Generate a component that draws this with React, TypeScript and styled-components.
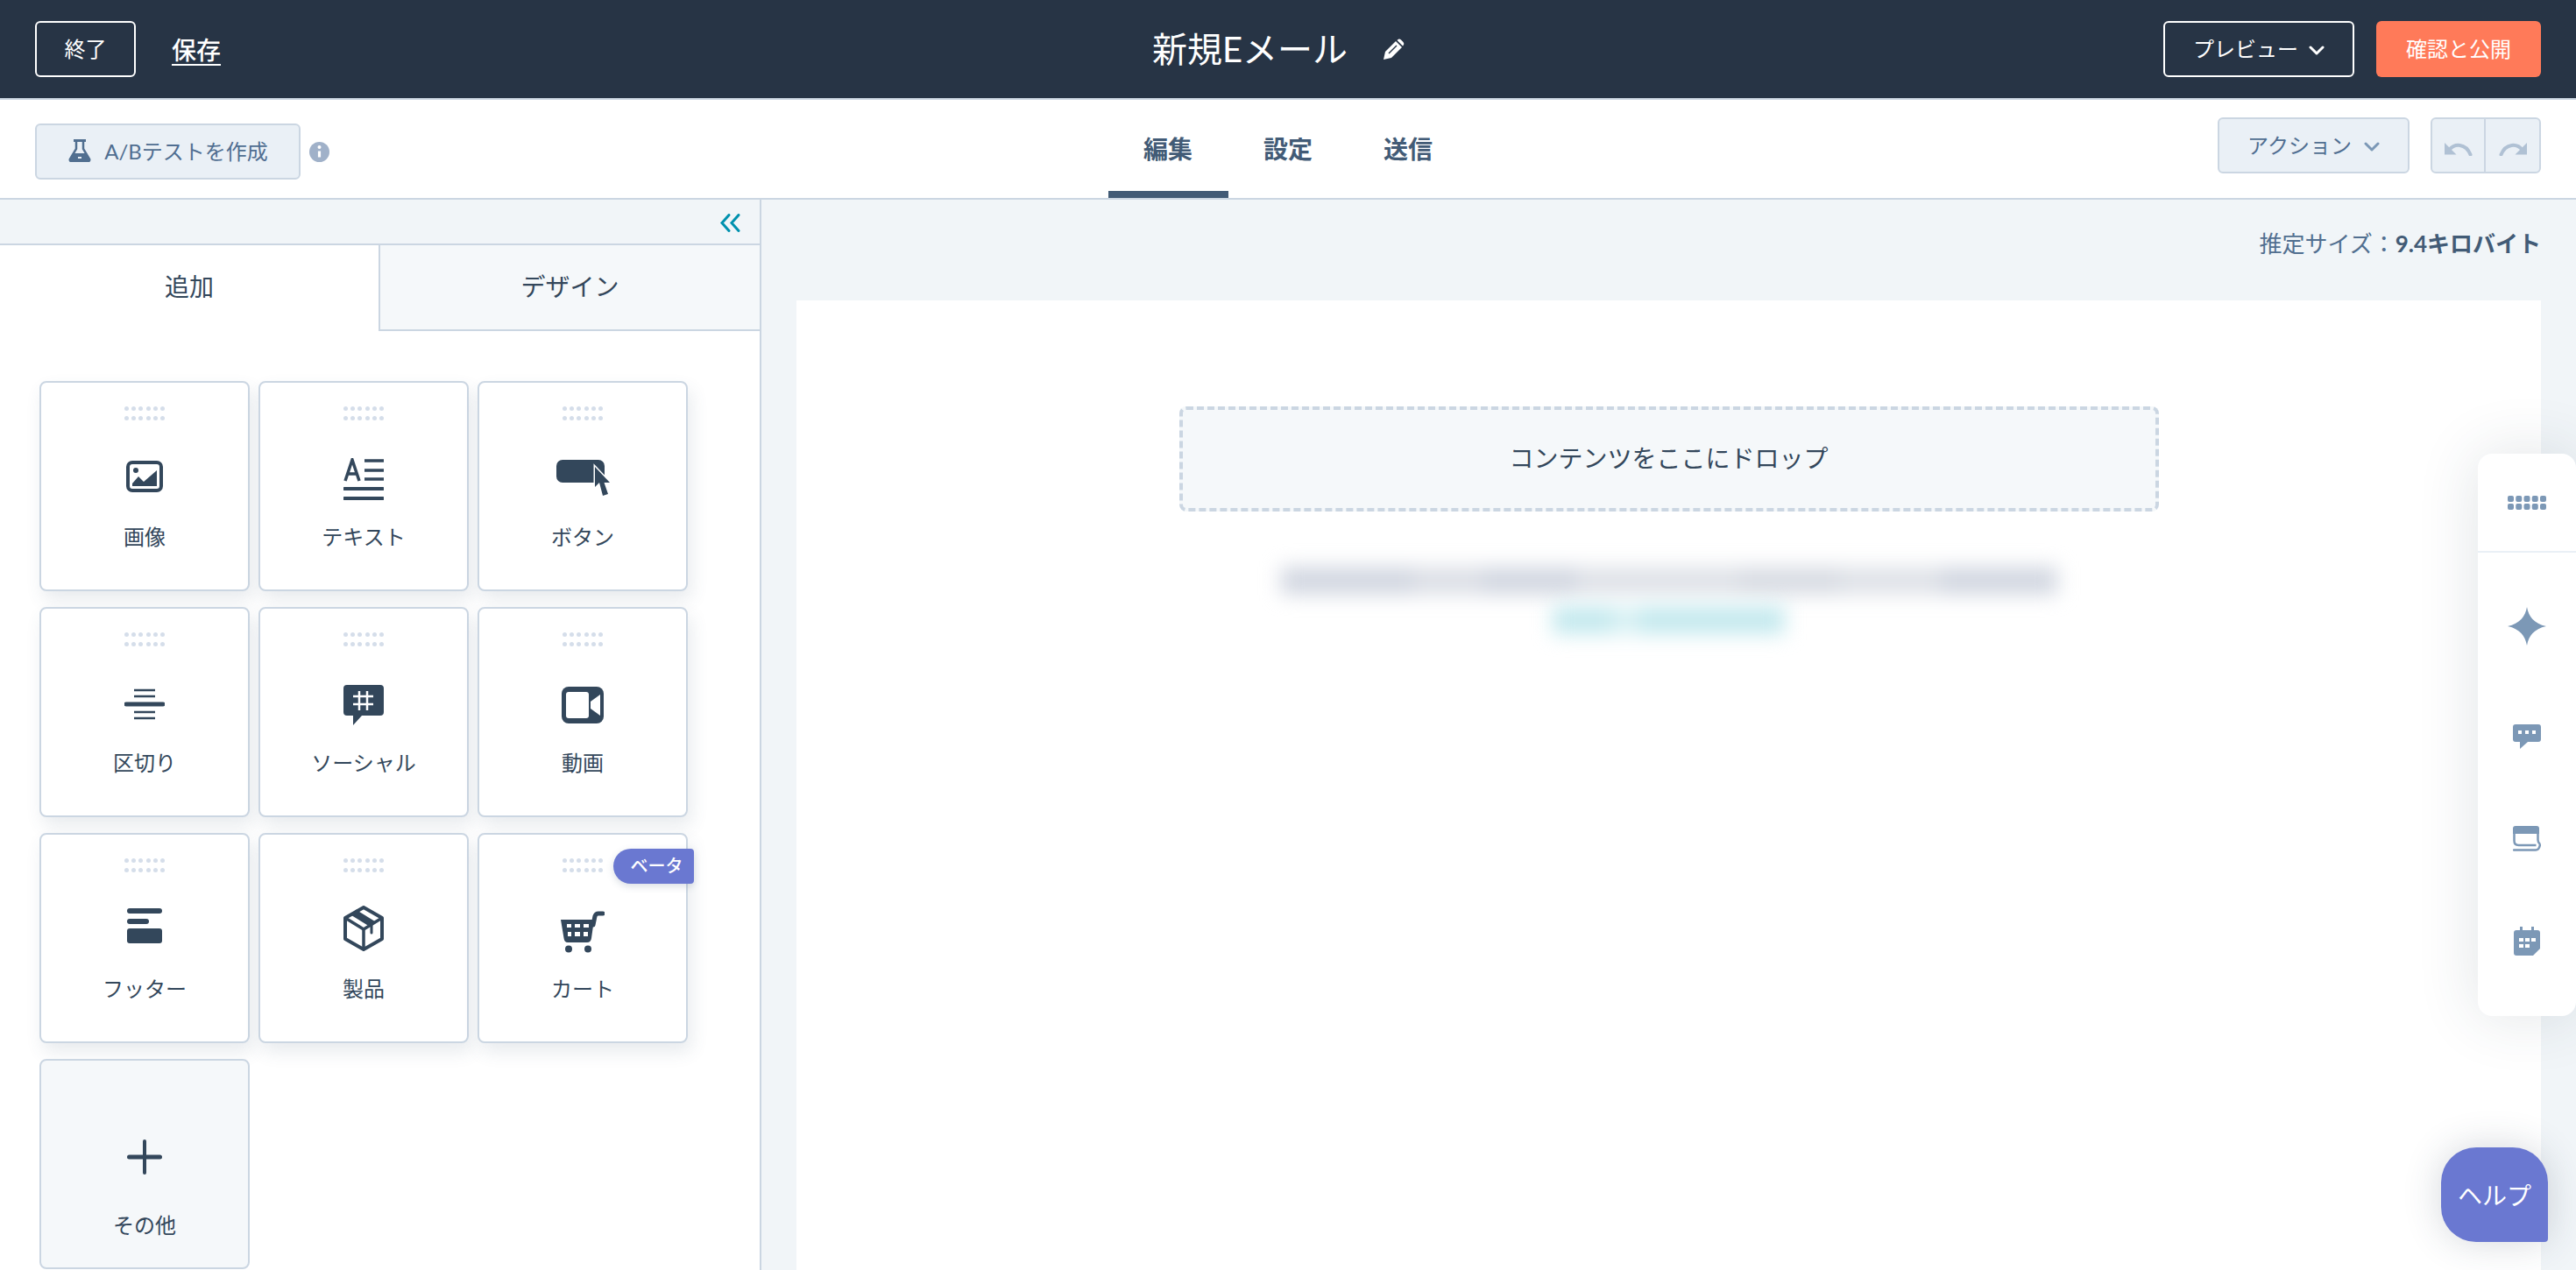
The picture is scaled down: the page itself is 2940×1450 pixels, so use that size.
import React from 'react'
import styled, { createGlobalStyle } from 'styled-components'

const GlobalStyle = createGlobalStyle`
  html, body {
    margin: 0;
    padding: 0;
    height: 100%;
    overflow: hidden;
    background: #fff;
  }
  body {
    font-family: Lato, 'Noto Sans CJK JP', sans-serif;
    color: #33475b;
  }
  * {
    box-sizing: border-box;
  }
`

const Page = styled.div`
  width: 2940px;
  height: 1450px;
  display: flex;
  flex-direction: column;
  overflow: hidden;
  position: relative;
`

const TopBar = styled.header`
  height: 114px;
  flex: none;
  background: #273445;
  border-bottom: 2px solid #cbd6e2;
  display: grid;
  grid-template-columns: 1fr auto 1fr;
  align-items: center;
  padding: 0 40px;
  color: #fff;
`

const TopLeft = styled.div`
  display: flex;
  align-items: center;
  gap: 41px;
`

const TopRight = styled.div`
  display: flex;
  align-items: center;
  justify-content: flex-end;
  gap: 25px;
`

const GhostButton = styled.button<{ $width: number }>`
  width: ${(p) => p.$width}px;
  height: 64px;
  padding: 0 0 3px;
  background: transparent;
  border: 2px solid #fff;
  border-radius: 6px;
  color: #fff;
  font: inherit;
  font-size: 24px;
  display: flex;
  align-items: center;
  justify-content: center;
  gap: 12px;
`

const SaveLink = styled.a`
  color: #fff;
  font-size: 28px;
  font-weight: 500;
  text-decoration: underline;
  text-underline-offset: 5px;
`

const PublishButton = styled.button`
  width: 188px;
  height: 64px;
  padding: 0 0 3px;
  background: #ff7a59;
  border: 0;
  border-radius: 6px;
  color: #fff;
  font: inherit;
  font-size: 24px;
`

const TitleGroup = styled.div`
  display: flex;
  align-items: center;
  gap: 40px;
  margin-right: 21px;
`

const Title = styled.h1`
  margin: 0;
  font-size: 40px;
  font-weight: 400;
  line-height: 56px;
`

const SubBar = styled.div`
  height: 114px;
  flex: none;
  background: #fff;
  border-bottom: 2px solid #cbd6e2;
  display: grid;
  grid-template-columns: 1fr auto 1fr;
  align-items: stretch;
  padding: 0 40px;
`

const SubLeft = styled.div`
  display: flex;
  align-items: center;
  gap: 10px;
  padding-top: 6px;
`

const SubRight = styled.div`
  display: flex;
  align-items: center;
  justify-content: flex-end;
  gap: 24px;
  padding-bottom: 8px;
`

const SoftButton = styled.button<{ $width: number }>`
  width: ${(p) => p.$width}px;
  height: 64px;
  padding: 0 0 3px;
  background: #eaf0f6;
  border: 2px solid #cbd6e2;
  border-radius: 6px;
  color: #506e91;
  font: inherit;
  font-size: 24px;
  display: flex;
  align-items: center;
  justify-content: center;
  gap: 14px;
`

const UndoGroup = styled.div`
  width: 126px;
  height: 64px;
  display: grid;
  grid-template-columns: 1fr 1fr;
  background: #eaf0f6;
  border: 2px solid #cbd6e2;
  border-radius: 6px;
`

const UndoCell = styled.div<{ $divided?: boolean }>`
  display: flex;
  align-items: center;
  justify-content: center;
  padding-top: 6px;
  color: #b0c1d4;
  border-right: ${(p) => (p.$divided ? '2px solid #cbd6e2' : '0')};
`

const NavTabs = styled.nav`
  display: flex;
`

const NavTab = styled.div<{ $active?: boolean }>`
  width: 137px;
  padding-bottom: 3px;
  display: flex;
  align-items: center;
  justify-content: center;
  font-size: 28px;
  font-weight: 700;
  color: #425b76;
  box-shadow: ${(p) => (p.$active ? 'inset 0 -8px 0 #425b76' : 'none')};
`

const Body = styled.div`
  flex: 1;
  display: flex;
  min-height: 0;
`

const Sidebar = styled.aside`
  width: 869px;
  flex: none;
  background: #fff;
  border-right: 2px solid #cbd6e2;
  display: flex;
  flex-direction: column;
`

const CollapseBar = styled.div`
  height: 52px;
  flex: none;
  background: #f1f5f8;
  border-bottom: 2px solid #cbd6e2;
  display: flex;
  align-items: center;
  justify-content: flex-end;
  padding: 2px 21px 0 0;
  color: #0091ae;
`

const PanelTabs = styled.div`
  height: 98px;
  flex: none;
  display: grid;
  grid-template-columns: 432px 1fr;
`

const PanelTab = styled.div<{ $active?: boolean }>`
  display: flex;
  align-items: center;
  justify-content: center;
  padding-bottom: ${(p) => (p.$active ? 7 : 5)}px;
  font-size: 28px;
  background: ${(p) => (p.$active ? '#fff' : '#f5f8fa')};
  border-left: ${(p) => (p.$active ? '0' : '2px solid #cbd6e2')};
  border-bottom: ${(p) => (p.$active ? '0' : '2px solid #cbd6e2')};
`

const ModuleGrid = styled.div`
  display: grid;
  grid-template-columns: repeat(3, 240px);
  grid-auto-rows: 240px;
  column-gap: 10px;
  row-gap: 18px;
  padding: 57px 0 0 45px;
`

const ModuleCard = styled.div<{ $more?: boolean }>`
  position: relative;
  display: flex;
  flex-direction: column;
  align-items: center;
  padding-top: ${(p) => (p.$more ? 76 : 27)}px;
  background: ${(p) => (p.$more ? '#f5f8fa' : '#fff')};
  border: 2px solid #cbd6e2;
  border-radius: 8px;
  box-shadow: ${(p) => (p.$more ? 'none' : '4px 10px 20px rgba(66, 91, 118, 0.12)')};
`

const Grip = styled.div`
  display: grid;
  grid-template-columns: repeat(6, 5px);
  grid-auto-rows: 5px;
  column-gap: 3.4px;
  row-gap: 6px;
  height: 16px;
  margin-bottom: 30px;
`

const GripDot = styled.span`
  background: #d5deea;
  border-radius: 50%;
`

// $nudge moves the drawing off the slot's centre, each icon sits a little differently
const IconSlot = styled.div<{ $nudge?: number }>`
  height: 68px;
  padding-top: ${(p) => Math.max(p.$nudge ?? 0, 0) * 2}px;
  padding-bottom: ${(p) => Math.max(-(p.$nudge ?? 0), 0) * 2}px;
  display: flex;
  align-items: center;
  justify-content: center;
  color: #33475b;
`

const ModuleLabel = styled.div<{ $more?: boolean }>`
  margin-top: ${(p) => (p.$more ? 26 : 17)}px;
  font-size: 24px;
  line-height: 36px;
`

const BetaBadge = styled.span`
  position: absolute;
  top: 16px;
  right: -9px;
  width: 92px;
  height: 40px;
  padding: 0 0 3px 7px;
  display: flex;
  align-items: center;
  justify-content: center;
  background: #6a78d1;
  color: #fff;
  font-size: 20px;
  font-weight: 500;
  border-radius: 20px 4px 4px 20px;
  box-shadow: 0 3px 8px rgba(66, 91, 118, 0.2);
`

const Main = styled.main`
  flex: 1;
  min-width: 0;
  background: #f1f5f8;
  display: flex;
  flex-direction: column;
  padding: 0 40px;
`

const SizeRow = styled.div`
  height: 115px;
  flex: none;
  padding-top: 32px;
  text-align: right;
  font-size: 26px;
  line-height: 36px;
  color: #516f90;

  strong {
    color: #425b76;
    font-weight: 700;
  }
`

const Canvas = styled.div`
  flex: 1;
  background: #fff;
  display: flex;
  flex-direction: column;
  align-items: center;
  padding-top: 121px;
`

const DropZone = styled.div`
  width: 1118px;
  height: 120px;
  padding-bottom: 4px;
  display: flex;
  align-items: center;
  justify-content: center;
  background: #f5f8fa;
  border: 4px dashed #cbd6e2;
  border-radius: 8px;
  font-size: 28px;
`

// the footer copy is blurred out in the reference, so it is just smeared bars here
const BlurLine = styled.div<{ $width: number; $teal?: boolean }>`
  width: ${(p) => p.$width}px;
  height: 32px;
  margin-top: ${(p) => (p.$teal ? 13 : 63)}px;
  background: ${(p) =>
    p.$teal
      ? 'linear-gradient(90deg, #c4e9ee 0 26%, #d9f1f4 26% 37%, #c4e9ee 37% 100%)'
      : 'linear-gradient(90deg, #d2d7e1 0 17%, #dcdfe6 17% 26%, #d2d7e1 26% 38%, #dfe2e8 38% 59%, #d8dce3 59% 72%, #dfe2e8 72% 85%, #d2d7e1 85% 100%)'};
  filter: blur(11px);
`

const ToolPanel = styled.div`
  position: absolute;
  top: 518px;
  right: 0;
  width: 112px;
  height: 642px;
  background: #fff;
  border-radius: 16px;
  box-shadow: 0 0 70px rgba(45, 62, 80, 0.14);
  color: #7c98b6;
  display: flex;
  flex-direction: column;
`

const ToolHead = styled.div`
  height: 113px;
  flex: none;
  border-bottom: 2px solid #eaf0f6;
  display: flex;
  align-items: center;
  justify-content: center;
`

const ToolList = styled.div`
  display: flex;
  flex-direction: column;
  padding-top: 62px;
`

const ToolSlot = styled.div<{ $height: number; $gap?: number }>`
  height: ${(p) => p.$height}px;
  margin-bottom: ${(p) => p.$gap ?? 0}px;
  display: flex;
  align-items: center;
  justify-content: center;
`

const HelpButton = styled.button`
  position: absolute;
  top: 1310px;
  left: 2786px;
  width: 122px;
  height: 108px;
  padding: 0;
  background: #6a78d1;
  color: #fff;
  border: 0;
  border-radius: 40px 40px 4px 40px;
  font: inherit;
  font-size: 28px;
  box-shadow: 0 0 44px rgba(45, 62, 80, 0.2);
`

const ChevronSvg = styled.svg`
  margin-top: 6px;
`

const Chevron = ({ color }: { color: string }) => (
  <ChevronSvg width="18" height="11" viewBox="0 0 18 11" fill="none" stroke={color} strokeWidth="3" strokeLinecap="round" strokeLinejoin="round">
    <path d="M2 2l7 7 7-7" />
  </ChevronSvg>
)

const Pencil = () => (
  <svg width="26" height="26" viewBox="0 0 26 26">
    <path d="M1 25l2-9L15 4l7 7L10 23z" fill="#fff" />
    <path d="M17 2.500a3 3 0 0 1 4 0l2.500 2.500a3 3 0 0 1 0 4L23 9.500 16.500 3z" fill="#fff" />
    <path d="M7 18l9-9" stroke="#273445" strokeWidth="1.500" />
  </svg>
)

const Flask = () => (
  <svg width="28" height="26" viewBox="0 0 28 26" fill="none">
    <path d="M7 1.500h14" stroke="#516f90" strokeWidth="3" />
    <path d="M10 2v9L3 22.500Q2 25 5 25h18q3 0 2-2.500L18 11V2" stroke="#516f90" strokeWidth="2.500" />
    <path d="M6 16h16l3 7-1 2H4l-1-2z" fill="#516f90" />
    <path d="M12 21h4" stroke="#eaf0f6" strokeWidth="2" />
  </svg>
)

const InfoDot = () => (
  <svg width="23" height="23" viewBox="0 0 23 23">
    <circle cx="11.500" cy="11.500" r="11.500" fill="#a0b1c9" />
    <circle cx="11.500" cy="6" r="2" fill="#fff" />
    <path d="M11.500 10.500v7" stroke="#fff" strokeWidth="3.200" />
  </svg>
)

const Undo = ({ flip }: { flip?: boolean }) => (
  <svg width="32" height="17" viewBox="0 0 32 17" fill="none" style={flip ? { transform: 'scaleX(-1)' } : undefined}>
    <path d="M0 2v13.500h13.500z" fill="currentColor" />
    <path d="M5 10.500C11 2.500 24 2 29.500 15.500" stroke="currentColor" strokeWidth="4" strokeLinecap="round" />
  </svg>
)

const DoubleChevron = () => (
  <svg width="25" height="21" viewBox="0 0 25 21" fill="none" stroke="currentColor" strokeWidth="3" strokeLinecap="round">
    <path d="M11 1.500L3 10.500l8 9M22 1.500l-8 9 8 9" />
  </svg>
)

const ImageIcon = () => (
  <svg width="42" height="36" viewBox="0 0 42 36" fill="currentColor">
    <rect x="2" y="2" width="38" height="32" rx="5" fill="none" stroke="currentColor" strokeWidth="4" />
    <circle cx="11" cy="11" r="3" />
    <path d="M7 29v-3l7-8 6 6 15-13v18z" />
  </svg>
)

const TextIcon = () => (
  <svg width="46" height="48" viewBox="0 0 46 48" fill="none" stroke="currentColor" strokeWidth="3.500">
    <path d="M2 26L10 2l8 24M5 18h10" strokeWidth="3.500" />
    <path d="M24 3h22M24 14h22M24 24h22" />
    <path d="M1 35h44M1 46h44" strokeWidth="4" strokeLinecap="round" />
  </svg>
)

const ButtonIcon = () => (
  <svg width="61" height="42" viewBox="0 0 61 42" fill="currentColor">
    <rect x="0" y="0" width="55" height="26" rx="7" />
    <path d="M44 8v23l5-5 4 15 6-2-4.500-13H61z" stroke="#fff" strokeWidth="3" paintOrder="stroke" />
  </svg>
)

const DividerIcon = () => (
  <svg width="46" height="36" viewBox="0 0 46 36" fill="none" stroke="currentColor" strokeWidth="2.500">
    <path d="M11 2h24M11 9h24M11 27h24M11 34h24" />
    <path d="M2 18h42" strokeWidth="5" strokeLinecap="round" />
  </svg>
)

const SocialIcon = () => (
  <svg width="46" height="46" viewBox="0 0 46 46" fill="currentColor">
    <path d="M4 0h38a4 4 0 0 1 4 4v27a4 4 0 0 1-4 4H21L11 46V35H4a4 4 0 0 1-4-4V4a4 4 0 0 1 4-4z" />
    <path d="M18 7v22M27 7v22M11 13h23M11 22h23" stroke="#fff" strokeWidth="2.500" />
  </svg>
)

const VideoIcon = () => (
  <svg width="48" height="42" viewBox="0 0 48 42" fill="currentColor">
    <rect width="48" height="42" rx="8" />
    <rect x="5" y="6" width="26" height="30" rx="3" fill="#fff" />
    <path d="M44 9v24l-11-8v-8z" fill="#fff" />
  </svg>
)

const FooterIcon = () => (
  <svg width="40" height="40" viewBox="0 0 40 40" fill="currentColor">
    <rect width="40" height="6" rx="3" />
    <rect y="12" width="25" height="6" rx="3" />
    <rect y="23" width="40" height="17" rx="3" />
  </svg>
)

const ProductIcon = () => (
  <svg width="46" height="52" viewBox="0 0 46 52" fill="none" stroke="currentColor" strokeWidth="4" strokeLinejoin="round">
    <path d="M23 2l21 12v24L23 50 2 38V14z" />
    <path d="M2 14l21 13 21-13M23 27v23" strokeWidth="3.500" />
    <path d="M12 8l21 13" strokeWidth="8" />
    <path d="M32 21v10" strokeWidth="3" strokeLinecap="round" />
  </svg>
)

const CartIcon = () => (
  <svg width="50" height="48" viewBox="0 0 50 48" fill="currentColor">
    <path d="M48 3h-5q-3 0-4 3l-2 10" fill="none" stroke="currentColor" strokeWidth="5" strokeLinecap="round" />
    <path d="M0 10h38l-3 21q-.5 5-5 5H8q-4 0-4.500-5z" />
    <path d="M7 15h5v4H7zM16 15h6v4h-6zM26 15h6v4h-6zM8 24h4v5H8zM16 24h6v5h-6zM26 24h5v5h-5z" fill="#fff" />
    <circle cx="9" cy="43.500" r="4" />
    <circle cx="31" cy="43.500" r="4" />
  </svg>
)

const PlusIcon = () => (
  <svg width="40" height="40" viewBox="0 0 40 40" fill="none" stroke="currentColor" strokeLinecap="round">
    <path d="M20 2v36" strokeWidth="4" />
    <path d="M2.500 20h35" strokeWidth="5" />
  </svg>
)

const GridIcon = () => (
  <svg width="44" height="16" viewBox="0 0 44 16" fill="currentColor">
    {[0, 9.25, 18.5, 27.75, 37].map((x) => (
      <React.Fragment key={x}>
        <rect x={x} y="0" width="7" height="7" rx="2" />
        <rect x={x} y="9" width="7" height="7" rx="2" />
      </React.Fragment>
    ))}
  </svg>
)

const StarIcon = () => (
  <svg width="44" height="44" viewBox="0 0 44 44" fill="currentColor">
    <path d="M22 0c2 11 8 19 22 22-14 3-20 11-22 22-2-11-8-19-22-22 14-3 20-11 22-22z" />
  </svg>
)

const ChatIcon = () => (
  <svg width="32" height="28" viewBox="0 0 32 28" fill="currentColor">
    <path d="M3 0h26a3 3 0 0 1 3 3v14a3 3 0 0 1-3 3H17l-9 8v-8H3a3 3 0 0 1-3-3V3a3 3 0 0 1 3-3z" />
    <path d="M6 7h4v4H6zM14 7h4v4h-4zM22 7h4v4h-4z" fill="#fff" />
  </svg>
)

const BookIcon = () => (
  <svg width="32" height="29" viewBox="0 0 32 29" fill="none" stroke="currentColor" strokeWidth="2.500">
    <path d="M3 0h24a3 3 0 0 1 3 3v6H0V3a3 3 0 0 1 3-3z" fill="currentColor" stroke="none" />
    <path d="M1.500 6v11q0 5 5 5h20" />
    <path d="M28.500 6v10q0 3 2.500 5" />
    <path d="M1 27.500h25q4 0 5-6" strokeLinecap="round" />
  </svg>
)

const CalendarIcon = () => (
  <svg width="30" height="33" viewBox="0 0 30 33" fill="currentColor">
    <path d="M7 0h3v4h10V0h3v4h4a3 3 0 0 1 3 3v18l-8 8H3a3 3 0 0 1-3-3V7a3 3 0 0 1 3-3h4z" />
    <path d="M6 13h5v4H6zM13 13h5v4h-5zM20 13h5v4h-5zM6 20h5v4H6zM13 20h5v4h-5z" fill="#fff" />
  </svg>
)

const modules = [
  { label: '画像', icon: <ImageIcon />, nudge: 0 },
  { label: 'テキスト', icon: <TextIcon />, nudge: 3 },
  { label: 'ボタン', icon: <ButtonIcon />, nudge: 2 },
  { label: '区切り', icon: <DividerIcon />, nudge: 2 },
  { label: 'ソーシャル', icon: <SocialIcon />, nudge: 3 },
  { label: '動画', icon: <VideoIcon />, nudge: 3 },
  { label: 'フッター', icon: <FooterIcon />, nudge: -3 },
  { label: '製品', icon: <ProductIcon />, nudge: 0 },
  { label: 'カート', icon: <CartIcon />, nudge: 4, beta: true },
]

export default function App() {
  return (
    <Page>
      <GlobalStyle />
      <TopBar>
        <TopLeft>
          <GhostButton $width={115}>終了</GhostButton>
          <SaveLink>保存</SaveLink>
        </TopLeft>
        <TitleGroup>
          <Title>新規Eメール</Title>
          <Pencil />
        </TitleGroup>
        <TopRight>
          <GhostButton $width={218}>
            プレビュー
            <Chevron color="#fff" />
          </GhostButton>
          <PublishButton>確認と公開</PublishButton>
        </TopRight>
      </TopBar>

      <SubBar>
        <SubLeft>
          <SoftButton $width={303}>
            <Flask />
            A/Bテストを作成
          </SoftButton>
          <InfoDot />
        </SubLeft>
        <NavTabs>
          <NavTab $active>編集</NavTab>
          <NavTab>設定</NavTab>
          <NavTab>送信</NavTab>
        </NavTabs>
        <SubRight>
          <SoftButton $width={219}>
            アクション
            <Chevron color="#7c98b6" />
          </SoftButton>
          <UndoGroup>
            <UndoCell $divided>
              <Undo />
            </UndoCell>
            <UndoCell>
              <Undo flip />
            </UndoCell>
          </UndoGroup>
        </SubRight>
      </SubBar>

      <Body>
        <Sidebar>
          <CollapseBar>
            <DoubleChevron />
          </CollapseBar>
          <PanelTabs>
            <PanelTab $active>追加</PanelTab>
            <PanelTab>デザイン</PanelTab>
          </PanelTabs>
          <ModuleGrid>
            {modules.map((m) => (
              <ModuleCard key={m.label}>
                <Grip>
                  {Array.from({ length: 12 }, (_, i) => (
                    <GripDot key={i} />
                  ))}
                </Grip>
                <IconSlot $nudge={m.nudge}>{m.icon}</IconSlot>
                <ModuleLabel>{m.label}</ModuleLabel>
                {m.beta && <BetaBadge>ベータ</BetaBadge>}
              </ModuleCard>
            ))}
            <ModuleCard $more>
              <IconSlot>
                <PlusIcon />
              </IconSlot>
              <ModuleLabel $more>その他</ModuleLabel>
            </ModuleCard>
          </ModuleGrid>
        </Sidebar>

        <Main>
          <SizeRow>
            推定サイズ：<strong>9.4キロバイト</strong>
          </SizeRow>
          <Canvas>
            <DropZone>コンテンツをここにドロップ</DropZone>
            <BlurLine $width={886} />
            <BlurLine $width={265} $teal />
          </Canvas>
        </Main>
      </Body>

      <ToolPanel>
        <ToolHead>
          <GridIcon />
        </ToolHead>
        <ToolList>
          <ToolSlot $height={44} $gap={45}>
            <StarIcon />
          </ToolSlot>
          <ToolSlot $height={117}>
            <ChatIcon />
          </ToolSlot>
          <ToolSlot $height={117}>
            <BookIcon />
          </ToolSlot>
          <ToolSlot $height={117}>
            <CalendarIcon />
          </ToolSlot>
        </ToolList>
      </ToolPanel>
      <HelpButton>ヘルプ</HelpButton>
    </Page>
  )
}
